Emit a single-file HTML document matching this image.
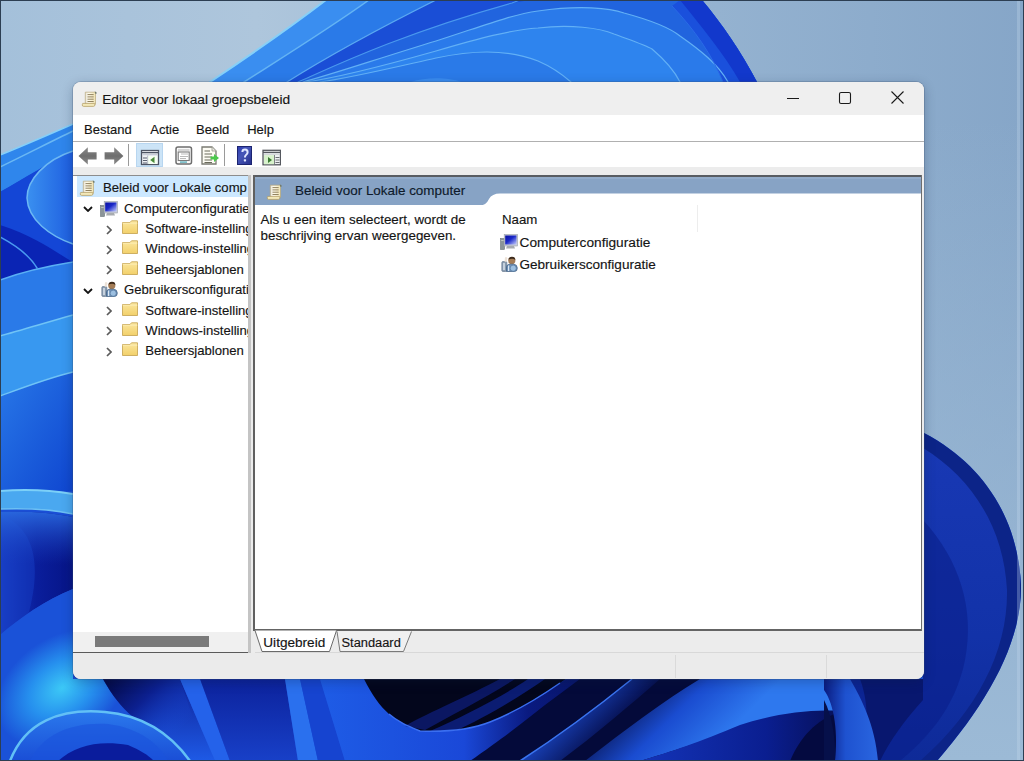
<!DOCTYPE html>
<html><head><meta charset="utf-8">
<style>
*{margin:0;padding:0;box-sizing:border-box}
html,body{width:1024px;height:761px;overflow:hidden;background:#a0bcd6}
body{position:relative;font-family:"Liberation Sans",sans-serif;font-size:13px;color:#141414}
#bg{position:absolute;left:0;top:0}
.win{position:absolute;left:73px;top:82px;width:851px;height:597px;border-radius:8px;overflow:hidden;background:#ececec;box-shadow:0 0 0 1px rgba(60,80,110,.25),0 3px 12px rgba(10,30,60,.28)}
.abs{position:absolute}
.t{position:absolute;white-space:nowrap;line-height:16px;-webkit-text-stroke:0.15px currentColor}
</style></head><body>
<svg id="bg" width="1024" height="761" viewBox="0 0 1024 761">
<defs>
  <linearGradient id="bgLight" x1="0" y1="0" x2="1024" y2="0" gradientUnits="userSpaceOnUse">
    <stop offset="0" stop-color="#a4c0da"/><stop offset=".25" stop-color="#aec6dc"/><stop offset=".7" stop-color="#94b2d0"/><stop offset="1" stop-color="#86a6c8"/>
  </linearGradient>
  <linearGradient id="rStrip" x1="0" y1="120" x2="0" y2="761" gradientUnits="userSpaceOnUse">
    <stop offset="0" stop-color="#9cbad6" stop-opacity="0"/><stop offset="1" stop-color="#9cbad6" stop-opacity="1"/>
  </linearGradient>
  <linearGradient id="leftA" x1="0" y1="0" x2="1" y2="1">
    <stop offset="0" stop-color="#2878e8"/><stop offset="1" stop-color="#0f46d0"/>
  </linearGradient>
  <linearGradient id="navyL" x1="0" y1="0" x2="1" y2="0">
    <stop offset="0" stop-color="#1a3ec4"/><stop offset=".5" stop-color="#0a1e9c"/><stop offset="1" stop-color="#061486"/>
  </linearGradient>
  <radialGradient id="cyanGlow" cx="62" cy="688" r="72" gradientUnits="userSpaceOnUse" gradientTransform="rotate(-35 62 688) scale(1 .7) translate(0 295)">
    <stop offset="0" stop-color="#3cc8f6"/><stop offset=".5" stop-color="#2690ee"/><stop offset="1" stop-color="#1a52d8"/>
  </radialGradient>
  <linearGradient id="circ" x1="923" y1="450" x2="923" y2="761" gradientUnits="userSpaceOnUse">
    <stop offset="0" stop-color="#1838b4"/><stop offset=".6" stop-color="#1232a8"/><stop offset="1" stop-color="#0e2a98"/>
  </linearGradient>
  <linearGradient id="bell" x1="824" y1="0" x2="878" y2="0" gradientUnits="userSpaceOnUse">
    <stop offset="0" stop-color="#0a1c80"/><stop offset=".4" stop-color="#1e52d0"/><stop offset="1" stop-color="#2a66e0"/>
  </linearGradient>
  <linearGradient id="bBright" x1="0" y1="0" x2="0" y2="1">
    <stop offset="0" stop-color="#1a5ed8"/><stop offset="1" stop-color="#2f7cee"/>
  </linearGradient>
  <linearGradient id="bDark" x1="0" y1="0" x2="1" y2="0">
    <stop offset="0" stop-color="#0a1a80"/><stop offset=".6" stop-color="#07104e"/><stop offset="1" stop-color="#0c2090"/>
  </linearGradient>
  <linearGradient id="swoosh" x1="320" y1="0" x2="640" y2="0" gradientUnits="userSpaceOnUse">
    <stop offset="0" stop-color="#1e5ce6"/><stop offset=".45" stop-color="#1a48d8"/><stop offset=".65" stop-color="#0a1a80"/><stop offset="1" stop-color="#061050"/>
  </linearGradient>
  <linearGradient id="darkDiag" x1="0" y1="0" x2="1" y2="0">
    <stop offset="0" stop-color="#020418"/><stop offset="1" stop-color="#0a1a70"/>
  </linearGradient>
  <linearGradient id="ribbonB" x1="560" y1="700" x2="600" y2="740" gradientUnits="userSpaceOnUse">
    <stop offset="0" stop-color="#1e50d8"/><stop offset="1" stop-color="#061050"/>
  </linearGradient>
  <linearGradient id="brightB" x1="640" y1="679" x2="710" y2="750" gradientUnits="userSpaceOnUse">
    <stop offset="0" stop-color="#06104a"/><stop offset=".5" stop-color="#1a4cd0"/><stop offset="1" stop-color="#2e78ee"/>
  </linearGradient>
  <linearGradient id="navyB" x1="640" y1="0" x2="850" y2="0" gradientUnits="userSpaceOnUse">
    <stop offset="0" stop-color="#1434b8"/><stop offset=".6" stop-color="#0a1e90"/><stop offset="1" stop-color="#060e50"/>
  </linearGradient>
  <linearGradient id="brCorner" x1="840" y1="0" x2="930" y2="0" gradientUnits="userSpaceOnUse">
    <stop offset="0" stop-color="#081670"/><stop offset="1" stop-color="#0f2a98"/>
  </linearGradient>
  <linearGradient id="gB" x1="0" y1="679" x2="0" y2="761" gradientUnits="userSpaceOnUse">
    <stop offset="0" stop-color="#0e2298"/><stop offset="1" stop-color="#1e5ae6"/>
  </linearGradient>
  <linearGradient id="gD" x1="0" y1="679" x2="0" y2="761" gradientUnits="userSpaceOnUse">
    <stop offset="0" stop-color="#0c229c"/><stop offset="1" stop-color="#1840c8"/>
  </linearGradient>
  <linearGradient id="navyTop" x1="0" y1="512" x2="0" y2="600" gradientUnits="userSpaceOnUse">
    <stop offset="0" stop-color="#2a6ae0" stop-opacity=".9"/><stop offset=".6" stop-color="#1a40c0" stop-opacity="0"/>
  </linearGradient>
  <linearGradient id="petalL" x1="27" y1="0" x2="73" y2="0" gradientUnits="userSpaceOnUse">
    <stop offset="0" stop-color="#3a90f0"/><stop offset="1" stop-color="#1e5ee0"/>
  </linearGradient>
  <linearGradient id="archG" x1="0" y1="712" x2="0" y2="761" gradientUnits="userSpaceOnUse">
    <stop offset="0" stop-color="#2a78ec"/><stop offset="1" stop-color="#1a4ed6"/>
  </linearGradient>
  <linearGradient id="triG" x1="110" y1="679" x2="170" y2="740" gradientUnits="userSpaceOnUse">
    <stop offset="0" stop-color="#040a48"/><stop offset=".45" stop-color="#0c2090"/><stop offset="1" stop-color="#1a50e0" stop-opacity="0"/>
  </linearGradient>
</defs>
<rect width="1024" height="761" fill="url(#bgLight)"/>
<rect x="760" y="0" width="264" height="761" fill="url(#rStrip)"/>
<!-- main bloom mass -->
<path d="M326 0 C292 26 252 54 210 82 C160 96 110 108 73 124 C45 136 22 146 0 155 L0 761 L937 761 C990 700 1022 640 1021 585 C1018 520 985 465 924 433 L905 433 L905 82 L757 82 C740 50 722 24 702 0 Z" fill="#1a4ed6"/>

<!-- ===== top band ===== -->
<path d="M326 0 C292 26 252 54 210 82 L244 82 C288 54 330 28 369 0 Z" fill="#3a8ef0"/>
<path d="M369 0 L436 0 C380 28 330 55 287 82 L244 82 C288 54 330 28 369 0 Z" fill="#2a7ae8"/>
<path d="M298 82 C330 68 400 34 512 3 L530 0 L702 0 C722 24 740 50 757 82 Z" fill="#2164de"/>
<path d="M303 82 C330 75 380 58 436 41 C480 27 510 15 538 11 C580 5 610 8 624 13 C650 20 670 28 680 36 C700 50 718 64 728 82 Z" fill="#2a7aea"/>
<path d="M306 82 C335 78 390 64 436 51 C480 38 510 30 538 28 C570 24 600 28 614 34 C630 40 645 45 652 49 C665 60 675 72 680 82 Z" fill="#2e84ee"/>
<path d="M320 82 C350 78 400 66 436 58 C455 54 470 52 487 52 C505 52 525 56 538 61 C552 67 563 75 571 82 Z" fill="#2a7ae8"/>
<path d="M411 82 C425 77 448 77 461 82 Z" fill="#3a8cf0"/>
<path d="M672 6 C695 30 712 55 723 82 L757 82 C740 50 722 24 702 0 L680 0 Z" fill="#1a50dc"/>
<path d="M680 0 C700 25 725 55 740 82 L757 82 C740 50 722 24 702 0 Z" fill="#1238cc"/>
<g fill="none" stroke-linecap="round">
<path d="M326 0 C292 26 252 54 210 82" stroke="#86d0f8" stroke-width="2"/>
<path d="M369 0 C330 28 288 54 244 82" stroke="#64b4f4" stroke-width="1.5"/>
<path d="M436 0 C380 28 330 55 287 82" stroke="#5aa8f2" stroke-width="1.3"/>
<path d="M298 82 C330 68 400 34 512 3 L520 0" stroke="#4a98ee" stroke-width="1.1"/>
<path d="M303 82 C330 75 380 58 436 41 C480 27 510 15 538 11 C580 5 610 8 624 13 C650 20 670 28 680 36 C700 50 718 64 728 82" stroke="#62b0f6" stroke-width="1.2"/>
<path d="M306 82 C335 78 390 64 436 51 C480 38 510 30 538 28 C570 24 600 28 614 34 C630 40 645 45 652 49 C665 60 675 72 680 82" stroke="#62b0f6" stroke-width="1.2"/>
<path d="M320 82 C350 78 400 66 436 58 C455 54 470 52 487 52 C505 52 525 56 538 61 C552 67 563 75 571 82" stroke="#62b0f6" stroke-width="1.2"/>
<path d="M672 6 C695 30 712 55 723 82" stroke="#2a6ae8" stroke-width="1"/>
</g>

<!-- ===== left strip ===== -->
<path d="M0 155 C25 145 50 134 73 124 L73 151 C50 162 25 178 0 192 Z" fill="#2f86ec"/>
<path d="M0 192 C25 178 50 162 73 151 L73 262 C48 266 22 272 0 280 Z" fill="#1446d6"/>
<path d="M73 151 C45 160 27 180 27 198 C28 220 50 236 73 244 Z" fill="url(#petalL)"/>

<path d="M0 225 C35 236 55 252 73 262 L0 280 Z" fill="#0a24b4"/>
<path d="M0 280 C22 272 48 266 73 262 L73 315 C48 322 22 330 0 336 Z" fill="#2a7ae8"/>
<path d="M0 336 C22 330 48 322 73 315 L73 372 C48 378 22 388 0 396 Z" fill="#3898f0"/>
<path d="M0 396 C22 388 48 378 73 372 L73 491 L0 491 Z" fill="url(#leftA)"/>
<path d="M0 491 C25 489 50 490 73 494 L73 514 C50 509 25 508 0 509 Z" fill="#4aa8f0"/>
<path d="M0 512 C25 511 50 512 73 517 L73 589 C45 600 20 618 0 635 Z" fill="url(#navyL)"/>
<path d="M0 515 C30 525 50 560 20 640 L0 640 Z" fill="#1640c8" opacity=".45"/>
<path d="M0 512 C25 511 50 512 73 517 L73 589 C45 600 20 618 0 635 Z" fill="url(#navyTop)"/>
<path d="M0 635 C20 618 45 600 73 589 L73 679 L0 700 Z" fill="url(#cyanGlow)"/>
<g fill="none" stroke-linecap="round">
<path d="M0 167 C25 155 50 142 73 131" stroke="#6ab8f4" stroke-width="1.5"/>
<path d="M0 155 C25 145 50 134 73 124" stroke="#86d0f8" stroke-width="1.5"/>
<path d="M73 151 C45 160 27 180 27 198 C28 220 50 236 73 244" stroke="#6cb8f4" stroke-width="1.5"/>
<path d="M0 237 C15 245 30 256 37 268" stroke="#4a9af0" stroke-width="1.5"/>
<path d="M0 280 C22 272 48 266 73 262" stroke="#5ab0f4" stroke-width="1.5"/>
<path d="M0 336 C22 330 48 322 73 315" stroke="#70c4f6" stroke-width="1.5"/>
<path d="M0 396 C22 388 48 378 73 372" stroke="#70c4f6" stroke-width="1.5"/>
<path d="M0 491 C25 489 50 490 73 494" stroke="#7cd0f8" stroke-width="2"/>
<path d="M0 509 C25 508 50 509 73 514" stroke="#6cc0f4" stroke-width="1.5"/>
</g>

<!-- ===== bottom band ===== -->
<path d="M0 679 L103 679 C112 695 122 708 132 716 C150 730 170 745 190 761 L0 761 Z" fill="url(#cyanGlow)"/>
<path d="M103 679 L180 679 L215 761 L190 761 C170 745 150 730 132 716 C122 708 112 695 103 679 Z" fill="url(#gB)"/>
<path d="M103 679 L180 679 L200 740 C170 735 150 725 132 716 C122 708 112 695 103 679 Z" fill="url(#triG)"/>
<path d="M10 761 C25 722 60 708 105 712 C150 716 175 740 190 761 Z" fill="url(#archG)"/>
<path d="M10 761 C25 722 60 708 105 712 C150 716 175 740 190 761" fill="none" stroke="#62c0f6" stroke-width="2.5"/>
<path d="M30 761 C42 735 70 722 108 724 C140 728 160 745 168 761 Z" fill="#1a54dc" opacity=".6"/>
<path d="M58 761 C75 745 100 740 128 745 C140 750 148 755 154 761 Z" fill="#0a1c9c"/>
<path d="M180 679 L200 679 L230 761 L215 761 Z" fill="#2462ea"/>
<path d="M200 679 L285 679 L298 761 L230 761 Z" fill="url(#gD)"/>
<path d="M285 679 L300 679 L318 761 L298 761 Z" fill="#2a70ee"/>
<path d="M300 679 L320 679 L345 761 L318 761 Z" fill="#1644d0"/>
<path d="M320 679 L364 679 C372 695 380 706 389 714 C398 722 408 726 420 731 C445 732 470 730 490 722 C515 712 540 697 560 683 L566 679 L640 679 L640 761 L345 761 Z" fill="url(#swoosh)"/>
<path d="M364 679 C372 695 380 706 389 714 C398 722 408 726 420 731 C445 732 470 730 490 722 C515 712 540 697 560 683 L566 679 Z" fill="#03061c"/>
<path d="M405 726 C430 712 470 695 500 679 L515 679 C485 698 450 716 425 730 Z" fill="#0c1a6a" opacity=".9"/>
<path d="M430 731 C460 718 500 698 528 679 L545 679 C515 700 480 720 455 731 Z" fill="#0e2288" opacity=".8"/>
<path d="M389 714 C398 722 408 726 420 731 C445 732 470 730 490 722 C515 712 540 697 560 683" fill="none" stroke="#3a6ef0" stroke-width="1.5"/>
<path d="M470 761 C500 740 520 725 545 705 L580 679 L850 679 L850 761 Z" fill="#040a3a"/>
<path d="M520 761 C560 735 600 705 632 679 L660 679 C630 705 595 735 560 761 Z" fill="url(#ribbonB)"/>
<path d="M520 761 C560 735 600 705 632 679" fill="none" stroke="#3a74f0" stroke-width="1.6"/>
<path d="M585 761 C625 730 665 700 700 679 L850 679 L850 712 C800 712 760 722 700 742 C670 752 650 758 640 761 Z" fill="url(#brightB)"/>
<path d="M640 761 C670 752 700 742 740 725 C780 712 820 708 850 712 L850 761 Z" fill="url(#navyB)"/>
<path d="M790 761 C800 738 815 720 840 712 L850 761 Z" fill="#040a40"/>
<path d="M840 679 L930 679 L930 761 L860 761 C850 730 845 700 840 679 Z" fill="url(#brCorner)"/>

<!-- ===== right circle ===== -->
<path d="M924 433 C985 465 1018 520 1021 585 C1022 640 990 700 937 761 L840 761 L840 679 L923 679 L923 433 Z" fill="#0c2488"/>
<path d="M923 448 C972 478 1004 528 1007 590 C1008 650 978 710 920 761 L840 761 L840 679 L923 679 Z" fill="url(#circ)"/>
<path d="M923 520 C960 560 975 610 965 660 C955 710 925 740 900 761 L840 761 L840 679 L923 679 Z" fill="#0a1e88" opacity=".55"/>
<path d="M860 679 L923 679 L923 700 C905 720 890 740 880 761 L860 761 C870 730 868 700 860 679 Z" fill="#081466" opacity=".8"/>
<path d="M824 679 L850 679 C862 700 875 725 878 761 L835 761 C838 735 835 705 824 690 Z" fill="url(#bell)"/>
<path d="M824 700 C832 715 836 740 835 761 L824 761 Z" fill="#06104a"/>
<rect x="1017" y="0" width="3" height="761" fill="#c8dcf0" opacity=".3"/>
<!-- frame border -->
<rect x="0.5" y="0.5" width="1023" height="760" fill="none" stroke="#2c3e52" stroke-width="1"/>
</svg>

<svg width="0" height="0" style="position:absolute">
<defs>
  <linearGradient id="gScroll" x1="0" y1="0" x2="1" y2="0">
    <stop offset="0" stop-color="#e8e4d8"/><stop offset=".35" stop-color="#fffbea"/><stop offset="1" stop-color="#efe2b0"/>
  </linearGradient>
  <linearGradient id="gFolder" x1="0" y1="0" x2="0" y2="1">
    <stop offset="0" stop-color="#fbe7a0"/><stop offset="1" stop-color="#f2d06a"/>
  </linearGradient>
  <linearGradient id="gScreen" x1="0" y1="0" x2="1" y2="1">
    <stop offset="0" stop-color="#0a10a0"/><stop offset=".45" stop-color="#1a28c8"/><stop offset="1" stop-color="#c8d0ff"/>
  </linearGradient>
  <linearGradient id="gArrow" x1="0" y1="0" x2="0" y2="1">
    <stop offset="0" stop-color="#8a8a8a"/><stop offset=".5" stop-color="#6e6e6e"/><stop offset="1" stop-color="#8a8a8a"/>
  </linearGradient>
  <linearGradient id="gHelp" x1="0" y1="0" x2="1" y2="1">
    <stop offset="0" stop-color="#2a3ab0"/><stop offset=".4" stop-color="#4656b8"/><stop offset="1" stop-color="#222c88"/>
  </linearGradient>
  <symbol id="scroll" viewBox="0 0 16 16">
    <path d="M3.8 1.2 H14 V13.2 H3.8 Z" fill="url(#gScroll)" stroke="#b8a87a" stroke-width=".7"/>
    <path d="M13.2 0.6 Q15.4 0.6 15.2 2.6 L14 3 Z" fill="#6e7868"/>
    <path d="M6 3.6 H12.2 M6 5.9 H12.2 M6 8.2 H12.2 M6 10.5 H12.2" stroke="#8c7c58" stroke-width=".95"/>
    <path d="M1.2 12.4 H12.6 Q13.6 12.4 13.4 14 Q13.2 15.4 12 15.4 H2 Q0.6 15.4 0.8 13.8 Q1 12.4 1.2 12.4Z" fill="#f2e8b8" stroke="#b09a60" stroke-width=".7"/>
  </symbol>
  <symbol id="folder" viewBox="0 0 16 14">
    <path d="M0.5 2.5 H8 L9.5 0.8 H15.5 V13.5 H0.5 Z" fill="url(#gFolder)" stroke="#c8a858" stroke-width=".9"/>
    <path d="M0.5 3.2 H15.5" stroke="#fff4c8" stroke-width=".6"/>
  </symbol>
  <symbol id="computer" viewBox="0 0 18 16">
    <rect x="0.5" y="4.5" width="4" height="11" fill="#8a9498" stroke="#6a7478" stroke-width=".6"/>
    <rect x="1.2" y="6" width="2.5" height="1" fill="#c0c8c0"/>
    <rect x="4.2" y="0.5" width="13.3" height="11.5" fill="#c8ccd8" stroke="#9aa0aa" stroke-width=".6"/>
    <rect x="5.2" y="1.5" width="11.3" height="9" fill="url(#gScreen)"/>
    <path d="M7 12 H14 L15 14.5 H6 Z" fill="#a8acb0"/>
  </symbol>
  <symbol id="user" viewBox="0 0 17 16">
    <rect x="0.8" y="5.5" width="5" height="10" rx="1.2" fill="#8a9cb0" stroke="#5a6e86" stroke-width=".6"/>
    <rect x="2.4" y="7" width="1.2" height="7" fill="#eef4fa"/>
    <path d="M4 1.5 Q5 0.5 6.5 2 L5.5 6 H3.5 Z" fill="#e8dcd0" opacity=".8"/>
    <circle cx="10.8" cy="4.6" r="3.6" fill="#a47c56"/>
    <path d="M7.4 3.6 Q8 0.6 11 0.7 Q14.4 0.8 14.3 4 Q12.5 2.4 9.5 3 Z" fill="#3c2a1c"/>
    <path d="M5.5 15.5 V11 Q5.8 8.2 9 8.2 H12.5 Q16.2 8.4 16.3 12 Q16.3 15.5 13.5 15.5 Z" fill="#6f92b8" stroke="#3e5c80" stroke-width=".7"/>
    <circle cx="12.2" cy="12.2" r="3.1" fill="#9cbfe0" stroke="#4a6c94" stroke-width=".6"/>
    <rect x="7" y="9.5" width="1.2" height="5.5" fill="#dce8f4"/>
  </symbol>
  <symbol id="chevD" viewBox="0 0 10 6"><path d="M1 1 L5 5 L9 1" fill="none" stroke="#141414" stroke-width="1.8"/></symbol>
  <symbol id="chevR" viewBox="0 0 6 10"><path d="M1 1 L5 5 L1 9" fill="none" stroke="#5a5a5a" stroke-width="1.7"/></symbol>
</defs>
</svg>

<div class="win">
<div class="abs" style="left:0.00px;top:0.00px;width:851.00px;height:33.00px;background:#efefef"></div>
<svg class="abs" style="left:8.00px;top:9.00px" width="17" height="16"><use href="#scroll"/></svg>
<div class="t" style="left:29.20px;top:9.65px;font-size:13.7px;color:#141414;">Editor voor lokaal groepsbeleid</div>
<svg class="abs" style="left:713.00px;top:10.00px" width="14" height="12" viewBox="0 0 14 12"><path d="M1 6.5 H13" stroke="#1a1a1a" stroke-width="1.1"/></svg>
<svg class="abs" style="left:765.00px;top:9.00px" width="14" height="14" viewBox="0 0 14 14"><rect x="1.5" y="1.5" width="11" height="11" rx="1.6" fill="none" stroke="#1a1a1a" stroke-width="1.1"/></svg>
<svg class="abs" style="left:817.00px;top:8.00px" width="15" height="15" viewBox="0 0 15 15"><path d="M1.5 1.5 L13.5 13.5 M13.5 1.5 L1.5 13.5" stroke="#1a1a1a" stroke-width="1.1"/></svg>
<div class="abs" style="left:0.00px;top:33.00px;width:851.00px;height:26.00px;background:#fff"></div>
<div class="t" style="left:11.00px;top:39.80px;font-size:13px;color:#141414;">Bestand</div>
<div class="t" style="left:77.30px;top:39.80px;font-size:13px;color:#141414;">Actie</div>
<div class="t" style="left:123.00px;top:39.80px;font-size:13px;color:#141414;">Beeld</div>
<div class="t" style="left:174.20px;top:39.80px;font-size:13px;color:#141414;">Help</div>
<div class="abs" style="left:0.00px;top:59.00px;width:851.00px;height:1.00px;background:#b0b0b0"></div>
<div class="abs" style="left:0.00px;top:60.00px;width:851.00px;height:25.00px;background:#fff"></div>
<div class="abs" style="left:0.00px;top:85.00px;width:851.00px;height:8.00px;background:#ececec"></div>
<svg class="abs" style="left:5.00px;top:65.00px" width="20" height="18" viewBox="0 0 20 18"><path d="M0.5 9 L9.8 0.3 V5.3 H18.6 V12.6 H9.8 V17.6 Z" fill="url(#gArrow)"/></svg>
<svg class="abs" style="left:31.00px;top:65.00px" width="20" height="18" viewBox="0 0 20 18"><path d="M19.4 9 L10.2 0.3 V5.3 H0.6 V12.6 H10.2 V17.6 Z" fill="url(#gArrow)"/></svg>
<div class="abs" style="left:55.00px;top:62.00px;width:1.00px;height:22.00px;background:#9a9a9a"></div>
<div class="abs" style="left:63.00px;top:61.00px;width:27.00px;height:24.00px;background:#cce4f7;box-shadow:inset 0 0 0 1px #b8d6f0"></div>
<svg class="abs" style="left:67.00px;top:67.00px" width="20" height="17" viewBox="0 0 20 17"><rect x="1.5" y="1.5" width="17" height="14" fill="#eef0f4" stroke="#4e5464" stroke-width="1.3"/><path d="M1.5 3.6 H18.5" stroke="#4e5464" stroke-width="1.2"/><rect x="2.5" y="5" width="15" height="1.2" fill="#c8ccd8"/><path d="M3 9 H7 M3 11.5 H7 M3 14 H7" stroke="#5a6070" stroke-width="1"/><path d="M7.8 6.5 V15" stroke="#9aa0ac" stroke-width=".8"/><rect x="8.3" y="7" width="9" height="8" fill="#f6fff2"/><path d="M14.5 7.8 L10.2 11 L14.5 14.2 Z" fill="#4a8a3a"/></svg>
<svg class="abs" style="left:102.00px;top:64.00px" width="18" height="19" viewBox="0 0 18 19"><rect x="1" y="1" width="15.5" height="17" rx="2" fill="#fafafa" stroke="#6e6e6e" stroke-width="1.5"/><path d="M3 4 H14.5" stroke="#b0b0b0" stroke-width="1"/><rect x="3.2" y="6" width="11" height="8.5" fill="#fff" stroke="#7a7a7a" stroke-width="1.1"/><path d="M6 8 H13 M5 10.5 H13 M5 12.5 H11" stroke="#a8a8a8" stroke-width=".8"/><rect x="5" y="15.3" width="7" height="1.6" fill="#70b8c4"/></svg>
<svg class="abs" style="left:128.00px;top:64.00px" width="19" height="19" viewBox="0 0 19 19"><path d="M1 1 H11 L15 5 V18 H1 Z" fill="#fdfcf4" stroke="#7a7a72" stroke-width="1.3"/><path d="M11 1 V5 H15" fill="#e8e8e0" stroke="#9a9a90" stroke-width=".8"/><path d="M3.5 5 H9 M3.5 8 H11 M3.5 11 H11 M3.5 14 H11 M3.5 16.5 H11" stroke="#6a6a5a" stroke-width="1"/><path d="M9.5 10.5 H13 V8 L18 12 L13 16 V13.5 H9.5 Z" fill="#4cc84c"/></svg>
<div class="abs" style="left:151.00px;top:62.00px;width:1.00px;height:22.00px;background:#9a9a9a"></div>
<svg class="abs" style="left:164.00px;top:64.00px" width="15" height="19" viewBox="0 0 15 19"><rect x="0" y="0" width="15" height="19" fill="url(#gHelp)"/><rect x="0.5" y="0.5" width="14" height="18" fill="none" stroke="#1c2470" stroke-width="1"/><path d="M5.4 6 Q5.4 3.6 8 3.6 Q10.6 3.6 10.6 6.2 Q10.6 8 9 9 Q7.9 9.8 7.9 11.6" fill="none" stroke="#dfe6ff" stroke-width="2"/><rect x="6.8" y="13.2" width="2.3" height="2.2" rx=".6" fill="#dfe6ff"/></svg>
<svg class="abs" style="left:188.50px;top:67.00px" width="19" height="17" viewBox="0 0 19 17"><rect x="1" y="1.3" width="17.5" height="14.5" fill="#eef0f2" stroke="#55585e" stroke-width="1.3"/><path d="M1 3.4 H18.5" stroke="#55585e" stroke-width="1.2"/><rect x="2" y="4.5" width="16" height="1.2" fill="#c8ccd0"/><rect x="2" y="6.2" width="10" height="9" fill="#d8f2cc"/><path d="M6 8 L10 11 L6 14 Z" fill="#3a7a32"/><path d="M12.5 6 V15.5" stroke="#707478" stroke-width=".9"/><path d="M13.5 8.5 H17.5 M13.5 11 H17.5 M13.5 13.5 H17.5" stroke="#6a6e72" stroke-width="1"/></svg>
<div class="abs" style="left:0.00px;top:93.00px;width:176.00px;height:478.00px;background:#fff;border-top:1px solid #8c8c8c;border-bottom:1px solid #5a5a5a"></div>
<div class="abs" style="left:175.00px;top:93.00px;width:2.50px;height:478.00px;background:#c4c4c4"></div>
<div class="abs" style="left:0.00px;top:550.00px;width:175.00px;height:20.00px;background:#f0f0f0"></div>
<div class="abs" style="left:21.60px;top:554.00px;width:114.10px;height:11.00px;background:#7a7a7a"></div>
<div class="abs" style="left:3.50px;top:94.00px;width:171.50px;height:21.00px;background:#cce8ff"></div>
<div class="abs" style="left:0px;top:0px;width:175px;height:550px;overflow:hidden">
<svg class="abs" style="left:6.00px;top:98.00px" width="17" height="16"><use href="#scroll"/></svg>
<div class="t" style="left:30.00px;top:98.04px;font-size:13.15px;color:#141414;">Beleid voor Lokale comp</div>
<svg class="abs" style="left:10.00px;top:124.20px" width="10" height="6"><use href="#chevD"/></svg>
<svg class="abs" style="left:27.00px;top:118.70px" width="18" height="16"><use href="#computer"/></svg>
<div class="t" style="left:51.00px;top:118.64px;font-size:13.15px;color:#141414;">Computerconfiguratie</div>
<svg class="abs" style="left:33.00px;top:142.90px" width="6" height="10"><use href="#chevR"/></svg>
<svg class="abs" style="left:48.50px;top:138.30px" width="16" height="14"><use href="#folder"/></svg>
<div class="t" style="left:72.30px;top:139.34px;font-size:13.15px;color:#141414;">Software-instellingen</div>
<svg class="abs" style="left:33.00px;top:162.90px" width="6" height="10"><use href="#chevR"/></svg>
<svg class="abs" style="left:48.50px;top:158.30px" width="16" height="14"><use href="#folder"/></svg>
<div class="t" style="left:72.30px;top:159.34px;font-size:13.15px;color:#141414;">Windows-instellingen</div>
<svg class="abs" style="left:33.00px;top:183.20px" width="6" height="10"><use href="#chevR"/></svg>
<svg class="abs" style="left:48.50px;top:178.60px" width="16" height="14"><use href="#folder"/></svg>
<div class="t" style="left:72.30px;top:179.64px;font-size:13.15px;color:#141414;">Beheersjablonen</div>
<svg class="abs" style="left:10.00px;top:205.60px" width="10" height="6"><use href="#chevD"/></svg>
<svg class="abs" style="left:28.00px;top:199.30px" width="17" height="16"><use href="#user"/></svg>
<div class="t" style="left:51.00px;top:200.04px;font-size:13.15px;color:#141414;">Gebruikersconfiguratie</div>
<svg class="abs" style="left:33.00px;top:224.10px" width="6" height="10"><use href="#chevR"/></svg>
<svg class="abs" style="left:48.50px;top:219.50px" width="16" height="14"><use href="#folder"/></svg>
<div class="t" style="left:72.30px;top:220.54px;font-size:13.15px;color:#141414;">Software-instellingen</div>
<svg class="abs" style="left:33.00px;top:244.40px" width="6" height="10"><use href="#chevR"/></svg>
<svg class="abs" style="left:48.50px;top:239.80px" width="16" height="14"><use href="#folder"/></svg>
<div class="t" style="left:72.30px;top:240.84px;font-size:13.15px;color:#141414;">Windows-instellingen</div>
<svg class="abs" style="left:33.00px;top:264.60px" width="6" height="10"><use href="#chevR"/></svg>
<svg class="abs" style="left:48.50px;top:260.00px" width="16" height="14"><use href="#folder"/></svg>
<div class="t" style="left:72.30px;top:261.04px;font-size:13.15px;color:#141414;">Beheersjablonen</div>
</div>
<div class="abs" style="left:180.00px;top:93.00px;width:669.30px;height:456.00px;background:#fff"></div>
<div class="abs" style="left:180.00px;top:93.00px;width:669.30px;height:2.00px;background:#585c62"></div>
<div class="abs" style="left:180.00px;top:93.00px;width:2.00px;height:456.00px;background:#606060"></div>
<div class="abs" style="left:180.00px;top:547.00px;width:669.30px;height:2.00px;background:#646464"></div>
<div class="abs" style="left:848.20px;top:93.00px;width:1.10px;height:456.00px;background:#6e6e6e"></div>
<div class="abs" style="left:182.00px;top:95.00px;width:666.20px;height:28.00px;background:#87a3c5"></div>
<div class="abs" style="left:182.00px;top:95.00px;width:666.20px;height:2.00px;background:#93acca"></div>
<svg class="abs" style="left:407.00px;top:111.00px" width="441.2" height="13" viewBox="0 0 441.2 13"><path d="M0 12.5 Q6 12.5 9 6 Q12 0.5 20 0.5 H442 V13 H0 Z" fill="#fff"/></svg>
<svg class="abs" style="left:193.00px;top:102.00px" width="17" height="16"><use href="#scroll"/></svg>
<div class="t" style="left:222.00px;top:100.95px;font-size:13.43px;color:#0e1a2a;">Beleid voor Lokale computer</div>
<div class="t" style="left:187.50px;top:129.96px;font-size:13.38px;color:#141414;">Als u een item selecteert, wordt de</div>
<div class="t" style="left:187.50px;top:145.86px;font-size:13.38px;color:#141414;">beschrijving ervan weergegeven.</div>
<div class="t" style="left:429.00px;top:130.10px;font-size:13.27px;color:#141414;">Naam</div>
<div class="abs" style="left:624.00px;top:123.00px;width:1.00px;height:27.00px;background:#ededed"></div>
<svg class="abs" style="left:427.00px;top:152.00px" width="18" height="16"><use href="#computer"/></svg>
<div class="t" style="left:446.50px;top:153.45px;font-size:13.7px;color:#141414;">Computerconfiguratie</div>
<svg class="abs" style="left:427.50px;top:174.00px" width="17" height="16"><use href="#user"/></svg>
<div class="t" style="left:446.50px;top:175.00px;font-size:13.55px;color:#141414;">Gebruikersconfiguratie</div>
<svg class="abs" style="left:180.00px;top:548.00px" width="170" height="23" viewBox="0 0 170 23"><path d="M2 0.5 L9 21.5 H76.5 L83.5 0.5" fill="#fff" stroke="#6a6a6a" stroke-width="1"/><path d="M84 1.5 L87 21.5 H150.5 L158.5 1.5" fill="#f0f0f0" stroke="#7a7a7a" stroke-width="1"/></svg>
<div class="t" style="left:190.30px;top:552.69px;font-size:13.6px;color:#141414;">Uitgebreid</div>
<div class="t" style="left:268.50px;top:552.95px;font-size:12.85px;color:#141414;">Standaard</div>
<div class="abs" style="left:0.00px;top:571.00px;width:851.00px;height:26.00px;background:#ebebeb"></div>
<div class="abs" style="left:182.00px;top:570.00px;width:669.00px;height:1.00px;background:#d8d8d8"></div>
<div class="abs" style="left:602.00px;top:573.00px;width:1.00px;height:23.00px;background:#dadada"></div>
<div class="abs" style="left:753.00px;top:573.00px;width:1.00px;height:23.00px;background:#dadada"></div>
</div>
</body></html>
